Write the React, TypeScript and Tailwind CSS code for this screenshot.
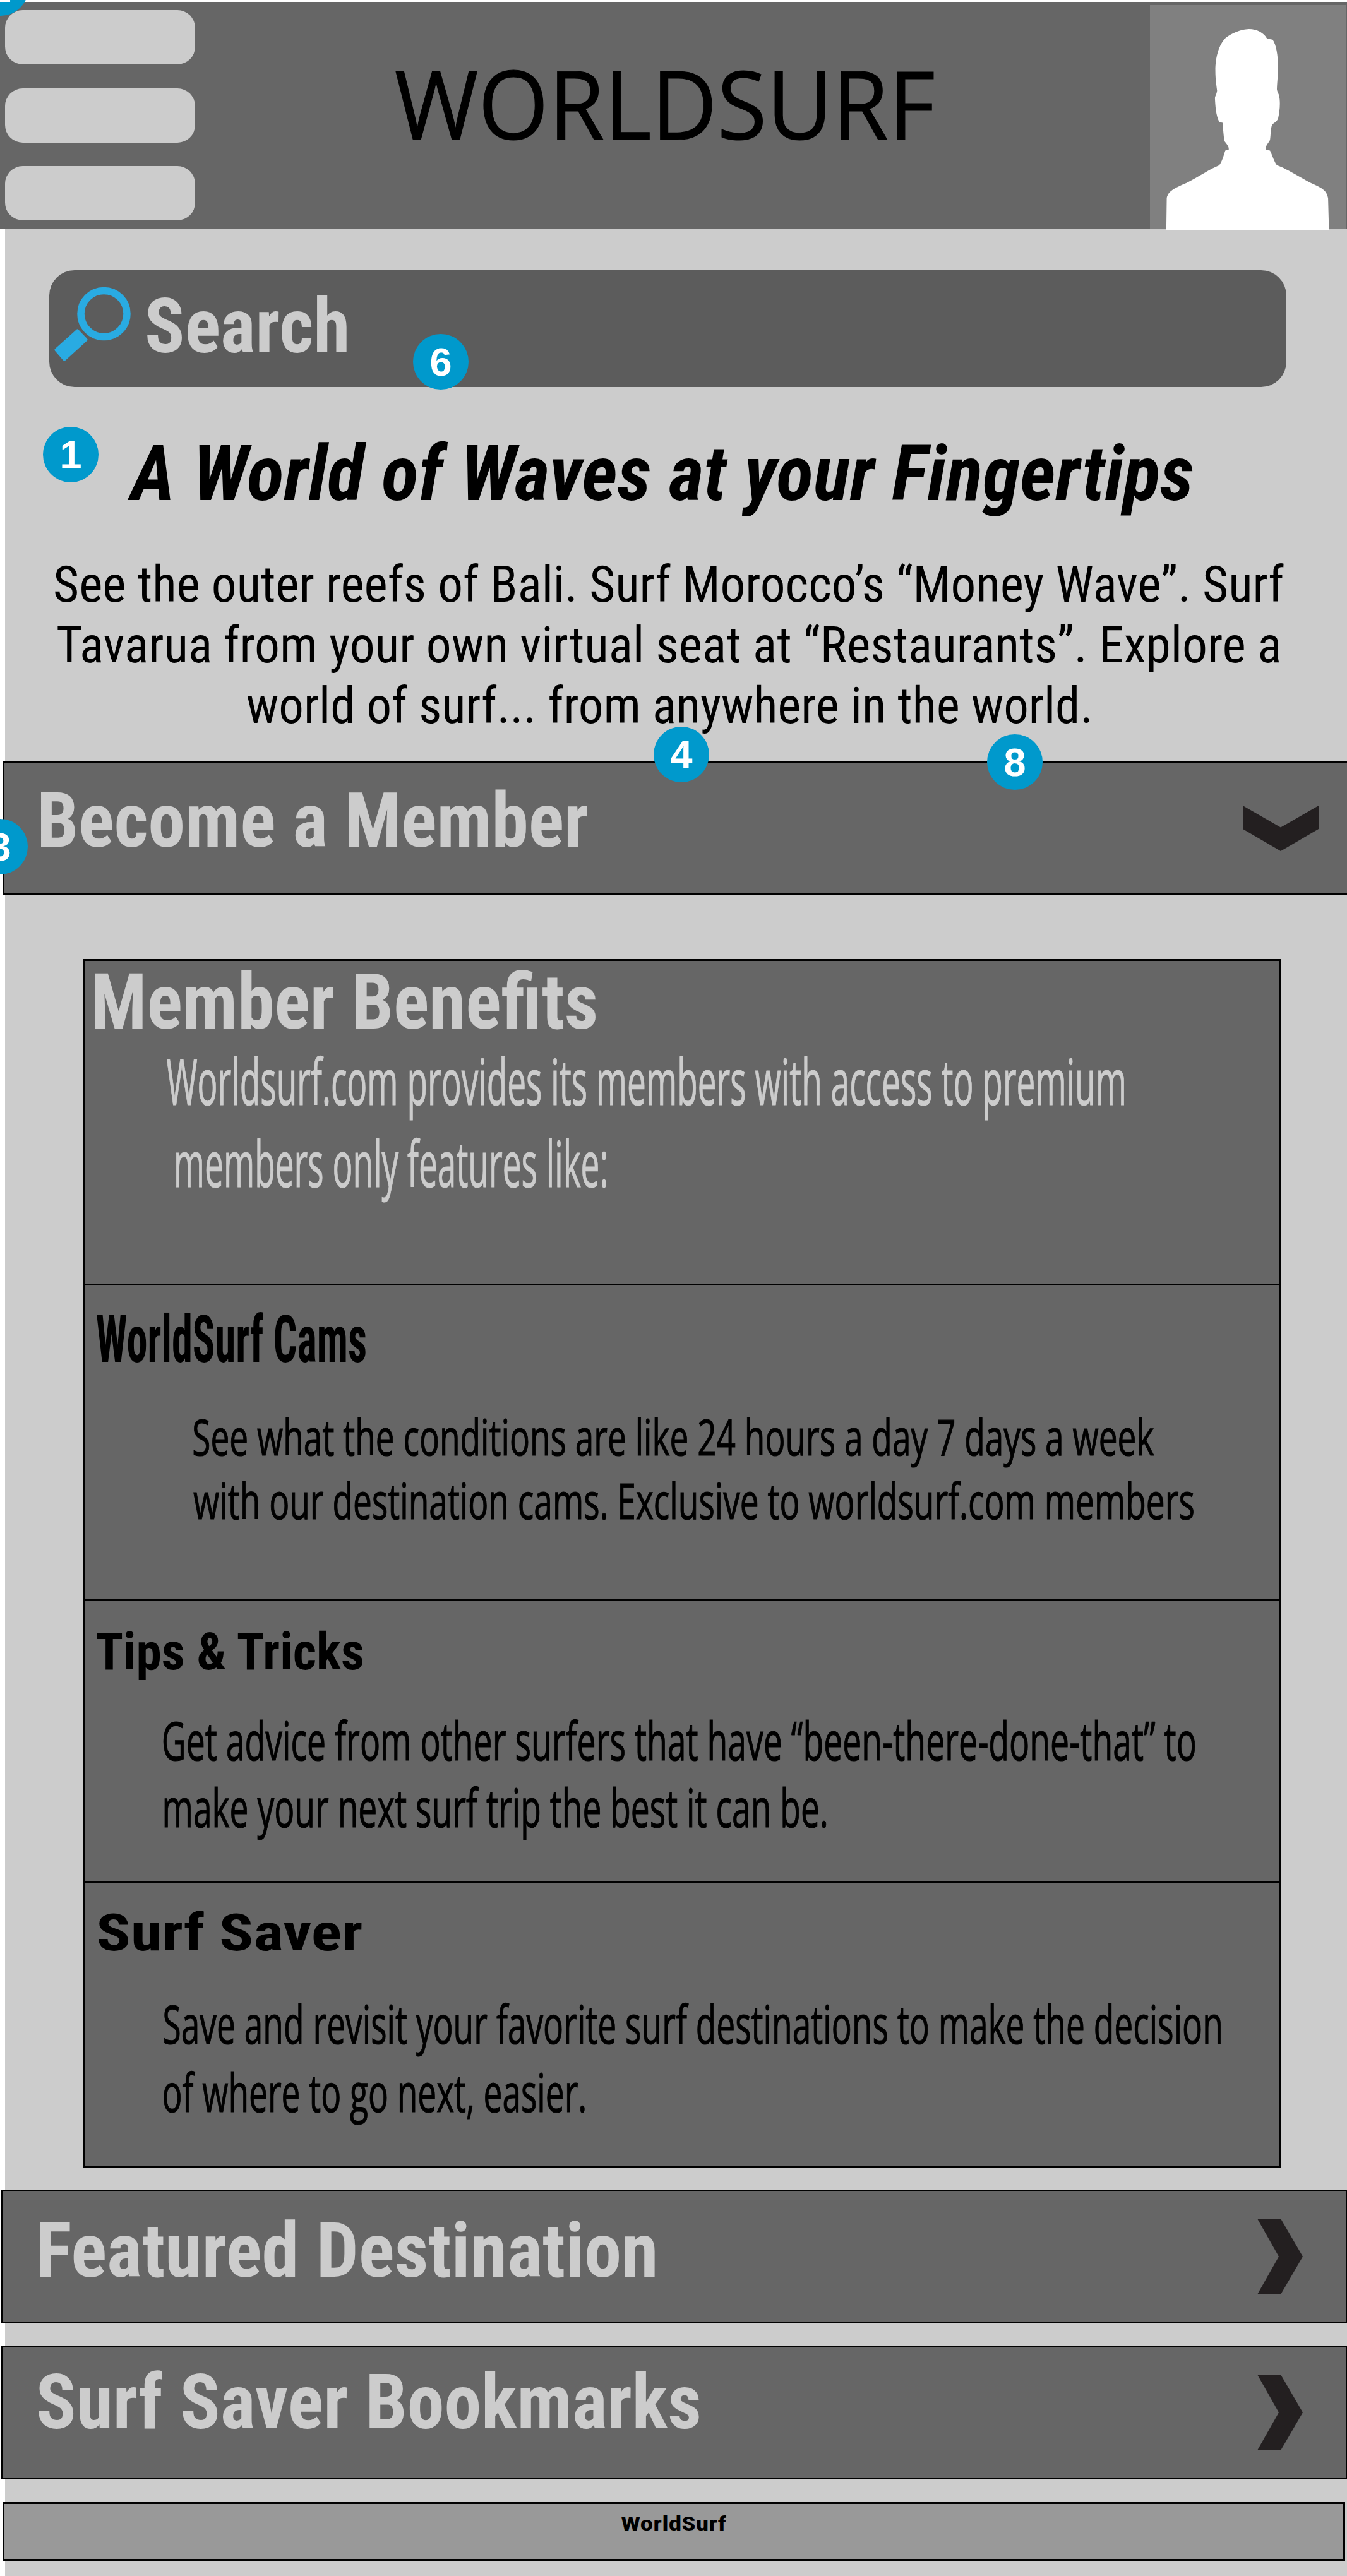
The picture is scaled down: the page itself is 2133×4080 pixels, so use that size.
import { useLayoutEffect, useRef, useState, type ReactNode } from "react";

const ROBOTO = "font-['Roboto_Condensed',Roboto,sans-serif] font-stretch-condensed leading-none";
const SANS = "font-['Open_Sans','Noto_Sans',sans-serif] [-webkit-text-stroke:1.2px_currentColor]";

/** One line of text whose ink is stretched or condensed to fill the width of its box. */
function Line({ children, className = "" }: { children: string; className?: string }) {
  const box = useRef<HTMLSpanElement>(null);
  const [transform, setTransform] = useState("none");

  useLayoutEffect(() => {
    const el = box.current;
    const ctx = document.createElement("canvas").getContext("2d");
    if (!el || !ctx) return;
    const cs = getComputedStyle(el);
    const stretch = cs.fontStretch === "75%" ? "condensed " : "";
    ctx.font = `${cs.fontStyle} ${cs.fontWeight} ${stretch}${cs.fontSize} ${cs.fontFamily}`;
    const m = ctx.measureText(children);
    const scale = el.clientWidth / (m.actualBoundingBoxRight + m.actualBoundingBoxLeft);
    setTransform(`translateX(${m.actualBoundingBoxLeft * scale}px) scaleX(${scale})`);
  }, [children]);

  return (
    <span ref={box} className={`block shrink-0 whitespace-nowrap ${className}`}>
      <span className="inline-block origin-left align-top" style={{ transform }}>
        {children}
      </span>
    </span>
  );
}

function Badge({ n, className }: { n: string; className: string }) {
  return (
    <span
      className={`absolute z-10 flex size-[88px] items-center justify-center rounded-full bg-[#0099cc] font-['Liberation_Sans',sans-serif] text-[63px] leading-none font-bold text-white ${className}`}
    >
      {n}
    </span>
  );
}

function ChevronRight() {
  return (
    <svg className="mt-[43px] mr-[68px] ml-auto h-[120px] w-[72px] fill-[#231f20]" viewBox="0 0 72 120">
      <path d="M0 0H37L72 60L37 120H0L34 60Z" />
    </svg>
  );
}

function ChevronDown() {
  return (
    <svg className="mt-[67px] mr-[45px] ml-auto h-[72px] w-[120px] fill-[#231f20]" viewBox="0 0 120 72">
      <path d="M0 0L60 34.5L120 0V37L60 72L0 37Z" />
    </svg>
  );
}

function SectionBar({ children, className = "" }: { children: ReactNode; className?: string }) {
  return (
    <div className={`flex h-[212px] items-start border-[3px] border-black bg-[#666] text-[#ccc] ${className}`}>
      {children}
    </div>
  );
}

export default function App() {
  return (
    <div className="relative h-[4080px] w-[2133px] overflow-hidden bg-white pt-[3px] text-black">
      <header className="flex h-[359px] items-start bg-[#666]">
        <div className="mt-[13px] ml-2 flex flex-col gap-[37.5px]">
          <div className="h-[86px] w-[301px] rounded-[28px] bg-[#ccc]" />
          <div className="h-[86px] w-[301px] rounded-[28px] bg-[#ccc]" />
          <div className="h-[86px] w-[301px] rounded-[28px] bg-[#ccc]" />
        </div>
        <h1 className="mt-[84px] ml-[318px]">
          <Line className={`${SANS} w-[851px] text-[151px] leading-none`}>WORLDSURF</Line>
        </h1>
        <div className="mt-[5px] mr-[2px] ml-auto h-[354px] w-[310px] bg-[#808080]">
          <svg className="h-full w-full overflow-visible" viewBox="1110 20 455 866" preserveAspectRatio="none">
            <path
              className="fill-white"
              d="M1340 113C1320 114 1300 130 1286 147C1272 170 1262 215 1262 275C1262 310 1265 335 1266 352C1265 365 1262 370 1261 380C1262 410 1263 445 1271 473L1279 476C1280 500 1281 525 1283 546C1286 556 1294 565 1293 580L1285 584C1281 605 1278 625 1271 641C1250 655 1225 684 1195 709C1165 730 1152 742 1149 768L1148 892H1526L1524 768C1521 738 1510 728 1480 706C1450 678 1425 652 1405 641C1398 625 1394 600 1389 584L1379 581C1378 565 1385 556 1389 543C1391 520 1390 500 1394 483C1400 475 1406 470 1408 458C1411 435 1414 400 1410 370C1407 357 1405 352 1405 345C1406 310 1408 285 1408 255C1407 215 1404 175 1395 154C1390 151 1383 152 1381 147C1375 130 1360 113 1340 113Z"
            />
          </svg>
        </div>
      </header>

      <main className="flex h-[3718px] flex-col bg-[linear-gradient(to_right,#fff_8px,#ccc_8px)]">
        <div className="mt-[66px] ml-[78px] flex h-[185px] w-[1959px] shrink-0 items-start rounded-[40px] bg-[#5c5c5c]">
          <svg className="mt-[26px] ml-2 h-[120px] w-[122px]" viewBox="0 0 122 120">
            <circle cx="78.5" cy="43" r="36.5" fill="none" stroke="#29abe2" strokeWidth="11.5" />
            <path
              d="M36.5 70L50 84L16 115L3 100Z"
              fill="#29abe2"
              stroke="#29abe2"
              strokeWidth="5"
              strokeLinejoin="round"
            />
          </svg>
          <Line className={`${ROBOTO} mt-[29px] ml-[25px] w-[316px] text-[121px] font-bold text-[#ccc]`}>Search</Line>
        </div>

        <section className="h-[593px] shrink-0 pt-[77px]">
          <h2>
            <Line className={`${ROBOTO} ml-[201px] w-[1688px] text-[122px] font-bold italic`}>
              A World of Waves at your Fingertips
            </Line>
          </h2>
          <p className="mt-[74px] flex flex-col text-[80px]">
            <Line className={`${ROBOTO} mb-4 ml-[87px] w-[1946px]`}>
              See the outer reefs of Bali. Surf Morocco’s “Money Wave”. Surf
            </Line>
            <Line className={`${ROBOTO} mb-4 ml-[91px] w-[1935px]`}>
              Tavarua from your own virtual seat at “Restaurants”. Explore a
            </Line>
            <Line className={`${ROBOTO} ml-[391px] w-[1334px]`}>world of surf... from anywhere in the world.</Line>
          </p>
        </section>

        <SectionBar className="ml-1 shrink-0 border-r-0">
          <Line className={`${ROBOTO} mt-[31px] ml-[57px] w-[866px] text-[121px] font-bold`}>Become a Member</Line>
          <ChevronDown />
        </SectionBar>

        <div className="mt-[101px] ml-[132px] w-[1896px] shrink-0 border-[3px] border-black bg-[#666]">
          <section className="h-[514px] border-b-[3px] border-black pt-[5px] text-[#ccc]">
            <h3>
              <Line className={`${ROBOTO} ml-[15px] w-[793px] text-[122px] font-bold`}>Member Benefits</Line>
            </h3>
            <p className="flex flex-col gap-[6px] text-[101px] leading-[124px]">
              <Line className={`${SANS} ml-[129px] w-[1516px]`}>
                Worldsurf.com provides its members with access to premium
              </Line>
              <Line className={`${SANS} ml-[144px] w-[681px]`}>members only features like:</Line>
            </p>
          </section>
          <section className="h-[500px] border-b-[3px] border-black pt-[34px]">
            <h3>
              <Line className={`${ROBOTO} ml-[18px] w-[426px] text-[104px] font-bold`}>WorldSurf Cams</Line>
            </h3>
            <p className="mt-[50px] text-[79px] leading-[101px]">
              <Line className={`${SANS} ml-[172px] w-[1520px]`}>
                See what the conditions are like 24 hours a day 7 days a week
              </Line>
              <Line className={`${SANS} ml-[171px] w-[1584px]`}>
                with our destination cams. Exclusive to worldsurf.com members
              </Line>
            </p>
          </section>
          <section className="h-[447px] border-b-[3px] border-black pt-[39px]">
            <h3>
              <Line className={`${ROBOTO} ml-[18px] w-[424px] text-[82px] font-bold`}>{"Tips & Tricks"}</Line>
            </h3>
            <p className="mt-[46px] text-[84px] leading-[106px]">
              <Line className={`${SANS} ml-[124px] w-[1633px]`}>
                Get advice from other surfers that have “been-there-done-that” to
              </Line>
              <Line className={`${SANS} ml-[126px] w-[1047px]`}>make your next surf trip the best it can be.</Line>
            </p>
          </section>
          <section className="h-[447px] pt-[37px]">
            <h3>
              <Line className={`${ROBOTO} ml-[20px] w-[418px] text-[82px] font-bold`}>Surf Saver</Line>
            </h3>
            <p className="mt-[48px] text-[85px] leading-[108px]">
              <Line className={`${SANS} ml-[125px] w-[1673px]`}>
                Save and revisit your favorite surf destinations to make the decision
              </Line>
              <Line className={`${SANS} ml-[124px] w-[667px]`}>of where to go next, easier.</Line>
            </p>
          </section>
        </div>

        <SectionBar className="mt-[35px] ml-[2px] shrink-0 border-r-2">
          <Line className={`${ROBOTO} mt-[34px] ml-[58px] w-[974px] text-[121px] font-bold`}>
            Featured Destination
          </Line>
          <ChevronRight />
        </SectionBar>
        <SectionBar className="mt-[35px] ml-[2px] shrink-0 border-r-2">
          <Line className={`${ROBOTO} mt-[27px] ml-[56px] w-[1046px] text-[121px] font-bold`}>
            Surf Saver Bookmarks
          </Line>
          <ChevronRight />
        </SectionBar>

        <footer className="mt-9 ml-1 h-[93px] w-[2126px] shrink-0 border-[3px] border-black bg-[#999] pt-4">
          <Line className={`${ROBOTO} ml-[976px] w-[167px] text-[31px] font-bold`}>WorldSurf</Line>
        </footer>
      </main>

      <Badge n="2" className="top-[-63px] left-[-43px]" />
      <Badge n="6" className="top-[529px] left-[654px]" />
      <Badge n="1" className="top-[676px] left-[68px]" />
      <Badge n="4" className="top-[1151px] left-[1035px]" />
      <Badge n="8" className="top-[1163px] left-[1563px]" />
      <Badge n="3" className="top-[1297px] left-[-44px]" />
    </div>
  );
}
